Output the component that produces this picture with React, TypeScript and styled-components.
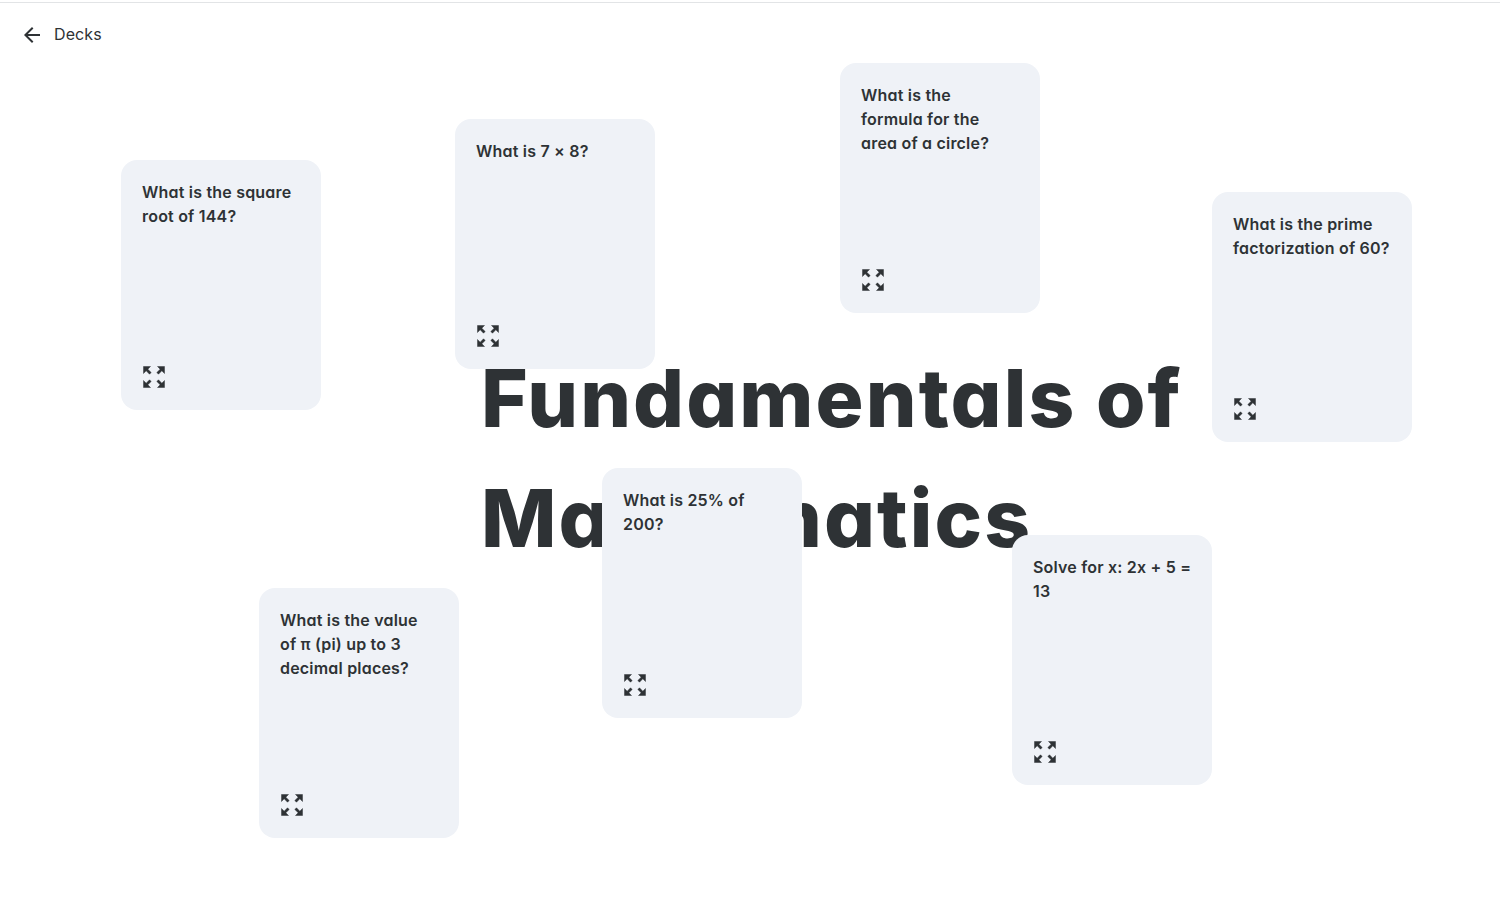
import React from "react";
import styled, { createGlobalStyle } from "styled-components";
import { MdArrowBack } from "react-icons/md";

const Global = createGlobalStyle`
  html, body { margin: 0; padding: 0; background: #fff; }
  body { font-family: "Inter", "Noto Sans", sans-serif; color: #2e3235; font-feature-settings: "cv11" 1; }
`;

const Page = styled.div`
  position: relative;
  width: 1500px;
  height: 912px;
  overflow: hidden;
  border-top: 1px solid #e2e4e6;
  margin-top: 2px;
  box-sizing: border-box;
`;

const Header = styled.a`
  display: flex;
  align-items: center;
  gap: 10px;
  height: 24px;
  padding: 20px 20px 0;
  font-size: 16px;
  font-weight: 400;
  letter-spacing: 0.1px;
  color: #2e3235;
`;

const HeaderLabel = styled.span`
  margin-bottom: 2px;
`;

const Stage = styled.main`
  display: flex;
  padding: 291px 0 0 481px;
`;

const Title = styled.h1`
  margin: 0;
  width: 760px;
  font-size: 80px;
  line-height: 120px;
  font-weight: 800;
  letter-spacing: 2.1px;
  color: #2e3235;
`;

const Card = styled.article<{ $x: number; $y: number }>`
  position: absolute;
  left: ${(p) => p.$x}px;
  top: ${(p) => p.$y - 3}px;
  width: 200px;
  height: 250px;
  box-sizing: border-box;
  padding: 20px 21px 19px;
  border-radius: 16px;
  background: #eff2f7;
  display: flex;
  flex-direction: column;
  justify-content: space-between;
`;

const Question = styled.p`
  margin: 0;
  font-size: 16px;
  line-height: 24px;
  font-weight: 600;
  letter-spacing: 0.2px;
  white-space: nowrap;
  color: #2e3235;
`;

const QuestionLine = styled.span`
  display: block;
`;

const Expand = styled.svg`
  display: block;
  width: 28px;
  height: 28px;
  margin-left: -2px;
  fill: #2e3235;
  stroke: #2e3235;
  stroke-width: 0.4;
`;

const ExpandIcon = () => (
  <Expand viewBox="0 0 24 24">
    <path d="M15 3l2.3 2.3-2.89 2.87 1.42 1.42L18.7 6.7 21 9V3zM3 9l2.3-2.3 2.87 2.89 1.42-1.42L6.7 5.3 9 3H3zm6 12l-2.3-2.3 2.89-2.87-1.42-1.42L5.3 17.3 3 15v6zm12-6l-2.3 2.3-2.87-2.89-1.42 1.42 2.89 2.87L15 21h6z" />
  </Expand>
);

const cards = [
  { x: 121, y: 160, q: ["What is the square", "root of 144?"] },
  { x: 455, y: 119, q: ["What is 7 × 8?"] },
  { x: 840, y: 63, q: ["What is the", "formula for the", "area of a circle?"] },
  { x: 1212, y: 192, q: ["What is the prime", "factorization of 60?"] },
  { x: 602, y: 468, q: ["What is 25% of", "200?"] },
  { x: 1012, y: 535, q: ["Solve for x: 2x + 5 =", "13"] },
  { x: 259, y: 588, q: ["What is the value", "of π (pi) up to 3", "decimal places?"] },
];

export default function App() {
  return (
    <Page>
      <Global />
      <Header>
        <MdArrowBack size={24} />
        <HeaderLabel>Decks</HeaderLabel>
      </Header>
      <Stage>
        <Title>Fundamentals of Mathematics</Title>
      </Stage>
      {cards.map((c) => (
        <Card key={c.q[0]} $x={c.x} $y={c.y}>
          <Question>
            {c.q.map((line) => (
              <QuestionLine key={line}>{line}</QuestionLine>
            ))}
          </Question>
          <ExpandIcon />
        </Card>
      ))}
    </Page>
  );
}
